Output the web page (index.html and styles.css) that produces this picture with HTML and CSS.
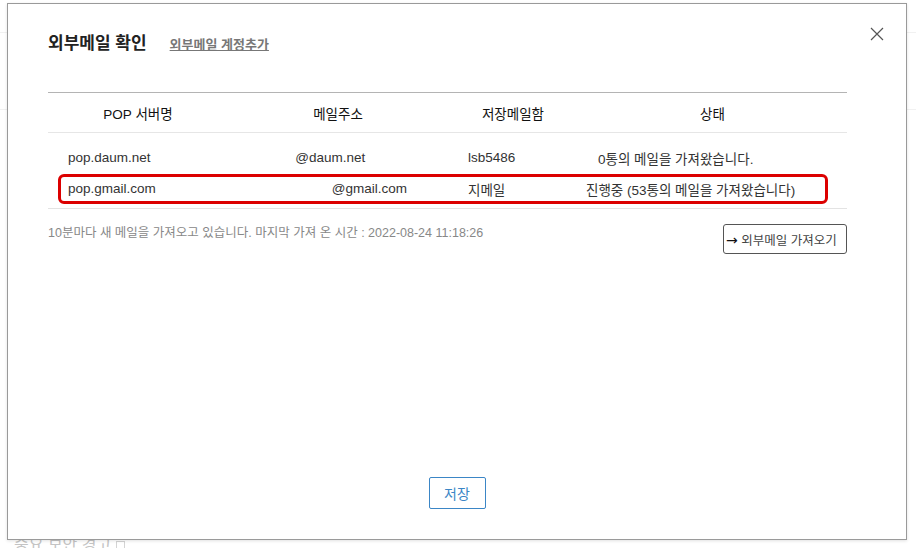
FILE: index.html
```html
<!DOCTYPE html>
<html lang="ko">
<head>
    <meta charset="UTF-8">
    <meta name="viewport" content="width=device-width, initial-scale=1.0">
    <title>외부메일 확인</title>
    <link rel="stylesheet" href="styles.css">
</head>
<body>

    <div class="page">
        <div class="page-line"></div>
        <div class="page-line"></div>
        <div class="page-notice">중요 보안 경고 <span class="notice-icon"></span></div>
    </div>

    <div class="modal">
        <button class="close-btn" aria-label="닫기">
            <svg width="14" height="14" viewBox="0 0 14 14">
                <path d="M1 1 L13 13 M13 1 L1 13" stroke="#555" stroke-width="1.2" fill="none"/>
            </svg>
        </button>

        <div class="modal-head">
            <h2>외부메일 확인</h2>
            <a href="#" class="add-link">외부메일 계정추가</a>
        </div>

        <div class="pop-table">
            <div class="pop-head">
                <div class="col col-server">POP 서버명</div>
                <div class="col col-mail">메일주소</div>
                <div class="col col-box">저장메일함</div>
                <div class="col col-state">상태</div>
            </div>
            <div class="pop-body">
                <div class="pop-row">
                    <div class="col col-server">pop.daum.net</div>
                    <div class="col col-mail"><span class="masked">lsb5486</span>@daum.net</div>
                    <div class="col col-box">lsb5486</div>
                    <div class="col col-state">0통의 메일을 가져왔습니다.</div>
                </div>
                <div class="pop-row active">
                    <div class="col col-server">pop.gmail.com</div>
                    <div class="col col-mail"><span class="masked">lsb548611235</span>@gmail.com</div>
                    <div class="col col-box">지메일</div>
                    <div class="col col-state running">진행중 (53통의 메일을 가져왔습니다)</div>
                </div>
            </div>
        </div>

        <div class="fetch-info">
            <p>10분마다 새 메일을 가져오고 있습니다. 마지막 가져 온 시간 : 2022-08-24 11:18:26</p>
            <button class="fetch-btn"><span class="arrow">→</span> 외부메일 가져오기</button>
        </div>

        <div class="modal-foot">
            <button class="save-btn">저장</button>
        </div>
    </div>

</body>
</html>
```

FILE: styles.css
```css
* {
    box-sizing: border-box;
}

body {
    margin: 0;
    width: 916px;
    height: 548px;
    overflow: hidden;
    background-color: #fff;
    font-family: "Liberation Sans", "Noto Sans CJK KR", sans-serif;
    color: #333;
    position: relative;
}

/* page behind the dialog */
.page {
    height: 548px;
    padding-top: 32px;
}

.page-line {
    height: 1px;
    background-color: #f1f1f1;
    margin-bottom: 76px;
}

.page-notice {
    position: absolute;
    left: 14px;
    top: 531px;
    font-size: 16px;
    color: #c4c4c4;
}

.notice-icon {
    display: inline-block;
    width: 9px;
    height: 10px;
    border: 1px solid #d4d4d4;
    vertical-align: middle;
}

/* dialog */
.modal {
    position: absolute;
    left: 7px;
    top: 3px;
    width: 900px;
    height: 537px;
    background-color: #fff;
    border: 1px solid #9a9a9a;
    box-shadow: 0 1px 3px rgba(0, 0, 0, 0.12);
    padding: 0 59px 0 40px;
    display: flex;
    flex-direction: column;
}

.close-btn {
    position: absolute;
    top: 23px;
    right: 22px;
    border: none;
    background: none;
    padding: 0;
    width: 14px;
    height: 14px;
    cursor: pointer;
}

.close-btn svg {
    display: block;
}

.modal-head {
    display: flex;
    align-items: baseline;
    padding-top: 25px;
}

.modal-head h2 {
    margin: 0;
    font-family: "Noto Sans CJK KR", sans-serif;
    font-size: 17px;
    line-height: 26px;
    font-weight: bold;
    color: #222;
}

.add-link {
    margin-left: 23px;
    font-family: "Noto Sans CJK KR", sans-serif;
    font-size: 13px;
    font-weight: bold;
    color: #777;
    text-decoration: underline;
}

/* table */
.pop-table {
    margin-top: 37px;
    border-top: 1px solid #b4b4b4;
    border-bottom: 1px solid #e3e3e3;
}

.pop-head,
.pop-row {
    display: flex;
    font-size: 13.5px;
}

.pop-head {
    height: 40px;
    align-items: center;
    border-bottom: 1px solid #e6e6e6;
    color: #111;
}

.pop-head .col {
    text-align: center;
}

.pop-body {
    padding: 9px 0 4px;
}

.pop-row {
    height: 31px;
    align-items: center;
    position: relative;
    color: #333;
}

.pop-row .col {
    padding-left: 20px;
}

.pop-row.active::after {
    content: "";
    position: absolute;
    left: 10px;
    right: 19px;
    top: 1px;
    bottom: 0;
    border: 3px solid #dc0000;
    border-radius: 6px;
}

.col-server { width: 180px; }
.col-mail { width: 220px; }
.col-box { width: 130px; }
.col-state { flex: 1; }

.pop-row .col-state.running {
    padding-left: 8px;
}

.masked {
    color: transparent;
}

/* fetch status line */
.fetch-info {
    display: flex;
    justify-content: space-between;
    align-items: flex-start;
    margin-top: 15px;
}

.fetch-info p {
    margin: 1px 0 0;
    font-size: 12.5px;
    line-height: 16px;
    color: #888;
}

.fetch-btn {
    height: 30px;
    width: 124px;
    padding: 0 0 0 2px;
    border: 1px solid #555;
    border-radius: 3px;
    background-color: #fff;
    font-family: inherit;
    font-size: 12.5px;
    color: #444;
    text-align: left;
    white-space: nowrap;
    cursor: pointer;
}

.fetch-btn .arrow {
    font-family: "DejaVu Sans", sans-serif;
    font-size: 14px;
    color: #111;
}

.modal-foot {
    margin-top: auto;
    margin-right: -19px;
    padding-bottom: 30px;
    display: flex;
    justify-content: center;
}

.save-btn {
    width: 57px;
    height: 32px;
    border: 1px solid #3b86c6;
    border-radius: 2px;
    background-color: #fff;
    font-family: "Noto Sans CJK KR", sans-serif;
    font-size: 14px;
    color: #3b86c6;
    cursor: pointer;
}
```
